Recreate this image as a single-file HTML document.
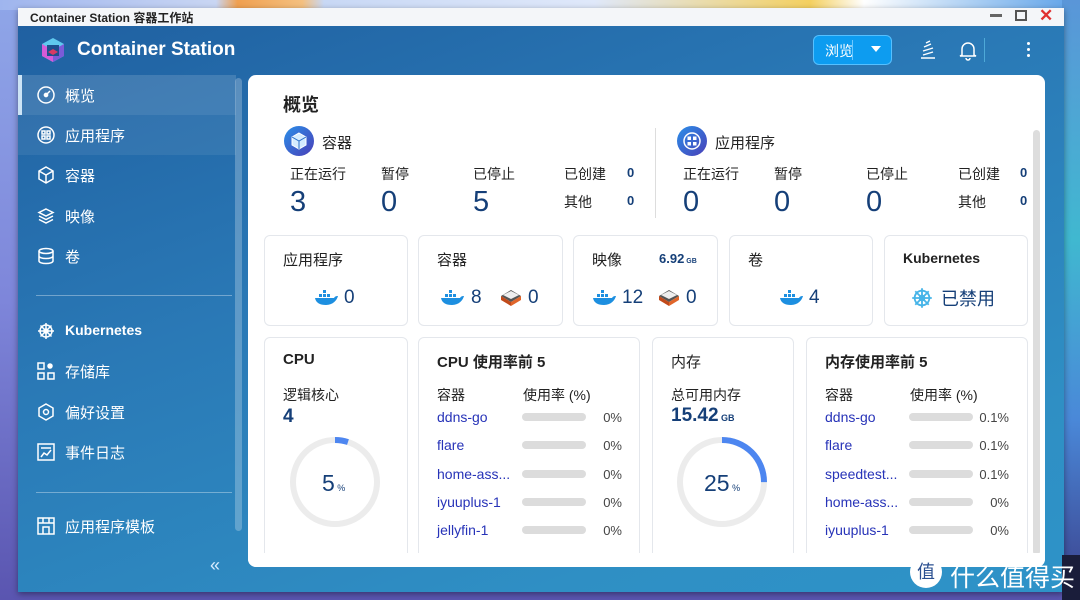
<!DOCTYPE html>
<html><head><meta charset="utf-8">
<style>
*{margin:0;padding:0;box-sizing:border-box}
body{width:1080px;height:600px;overflow:hidden;position:relative;font-family:"Liberation Sans","Noto Sans CJK SC",sans-serif;background:linear-gradient(180deg,#8fa6e8 0%,#7e86da 50%,#5a55b0 100%)}
.a{position:absolute}
.topdesk{left:0;top:0;width:1080px;height:10px;background:linear-gradient(90deg,#9fb5ee,#c9d6f3 20%,#f0a050 22%,#f4c080 28%,#c8d8f5 30%,#dfe8fa 55%,#f4d060 75%,#ffffff 80%,#5aa0e8 100%)}
.rightdesk{left:1062px;top:0;width:18px;height:600px;background:linear-gradient(180deg,#5a96d8,#40b8d0 40%,#4a88d8 70%,#3b3f8a 100%)}
.win{left:18px;top:8px;width:1046px;height:584px;background:linear-gradient(160deg,#1f5fa0 0%,#2a79b6 40%,#2f8fc4 80%,#2e93c8 100%);box-shadow:0 2px 6px rgba(0,0,0,.4)}
.title{left:18px;top:8px;width:1046px;height:18px;background:#f4f6f9}
.title span{position:absolute;left:12px;top:1px;font-size:12px;font-weight:bold;color:#222}
.side{color:#fff;font-size:15px}
.nav{position:absolute;left:18px;width:220px;height:40px}
.nav span{position:absolute;left:47px;top:10px}
.nav svg{position:absolute;left:19px;top:11px}
.card{position:absolute;left:248px;top:75px;width:797px;height:492px;background:#fff;border-radius:8px;overflow:hidden}
.box{position:absolute;border:1px solid #e4e7ec;border-radius:6px;background:#fff}
.lbl{position:absolute;font-size:14px;color:#222}
.big{position:absolute;font-size:29px;color:#153f78;font-weight:500}
.sm{position:absolute;font-size:13px;color:#153f78;font-weight:bold}
.h{position:absolute;font-size:15px;color:#222}
.lnk{position:absolute;font-size:14px;color:#2733b8}
.bar{position:absolute;width:64px;height:8px;border-radius:4px;background:#dcdcdc}
.pct{position:absolute;font-size:13px;color:#444;text-align:right;width:40px}
</style></head><body>
<div class="a topdesk"></div>
<div class="a rightdesk"></div>
<div class="a win"></div>
<div class="a title"><span>Container Station 容器工作站</span>
<div class="a" style="left:972px;top:6px;width:12px;height:3px;background:#666"></div>
<div class="a" style="left:997px;top:2px;width:12px;height:11px;border:2.5px solid #555"></div>
<div class="a" style="left:1021px;top:-2px;font-size:17px;color:#e03030;font-weight:bold">✕</div>
</div>
<!-- header -->
<svg class="a" style="left:40px;top:37px" width="26" height="26" viewBox="0 0 26 26"><polygon points="13,1 24,7 24,19 13,25 2,19 2,7" fill="#5fc9ee"/><polygon points="2,7 13,13 13,25 2,19" fill="#d55bd8"/><polygon points="24,7 13,13 13,25 24,19" fill="#7b5bd8"/><rect x="7" y="8" width="12" height="11" fill="#1d4f8e"/><polygon points="13,12 18,15 13,18 8,15" fill="#d83a64"/></svg>
<div class="a" style="left:77px;top:39px;font-size:19px;color:#fff;font-weight:bold">Container Station</div>
<div class="a" style="left:813px;top:35px;width:79px;height:30px;border-radius:6px;background:#0d9cf0;border:1px solid #55c0ff"></div>
<div class="a" style="left:825px;top:41px;color:#fff;font-size:14px">浏览</div>
<div class="a" style="left:852px;top:40px;width:1px;height:20px;background:#6cc8ff"></div>
<div class="a" style="left:871px;top:46px;width:0;height:0;border-left:5px solid transparent;border-right:5px solid transparent;border-top:6px solid #fff"></div>
<svg class="a" style="left:918px;top:39px" width="20" height="22" viewBox="0 0 20 22" fill="none" stroke="#fff" stroke-width="1.4"><path d="M3 19h14M5 16l10-3M5 12l10-3M6 8l7-3M8 4l4-2"/></svg>
<svg class="a" style="left:958px;top:39px" width="20" height="22" viewBox="0 0 20 22" fill="none" stroke="#fff" stroke-width="1.5"><path d="M4 16V10a6 6 0 0 1 12 0v6l2 1H2z M8 19a2 2 0 0 0 4 0"/></svg>
<div class="a" style="left:984px;top:38px;width:1px;height:24px;background:#4ea9d8"></div>
<div class="a" style="left:1027px;top:42px;width:3px;height:3px;background:#fff;border-radius:2px;box-shadow:0 6px 0 #fff,0 12px 0 #fff"></div>
<!-- sidebar -->
<div class="a" style="left:18px;top:75px;width:218px;height:40px;background:rgba(255,255,255,.14)"></div>
<div class="a" style="left:18px;top:75px;width:4px;height:40px;background:#cde4f6"></div>
<div class="a" style="left:18px;top:115px;width:218px;height:40px;background:rgba(255,255,255,.07)"></div>
<div class="a" style="left:235px;top:78px;width:7px;height:453px;border-radius:4px;background:rgba(255,255,255,.25)"></div>
<div class="side">
<div class="nav" style="top:75px"><svg width="18" height="18" viewBox="0 0 18 18" fill="none" stroke="#fff" stroke-width="1.5"><circle cx="9" cy="9" r="8"/><circle cx="9" cy="9" r="1.6" fill="#fff"/><path d="M9 9l4-4"/></svg><span>概览</span></div>
<div class="nav" style="top:115px"><svg width="18" height="18" viewBox="0 0 18 18" fill="none" stroke="#fff" stroke-width="1.5"><circle cx="9" cy="9" r="8"/><rect x="5" y="5" width="3" height="3"/><rect x="10" y="5" width="3" height="3"/><rect x="5" y="10" width="3" height="3"/><rect x="10" y="10" width="3" height="3"/></svg><span>应用程序</span></div>
<div class="nav" style="top:155px"><svg width="18" height="18" viewBox="0 0 18 18" fill="none" stroke="#fff" stroke-width="1.5"><path d="M9 1l7 4v8l-7 4-7-4V5z M2 5l7 4 7-4 M9 9v8"/></svg><span>容器</span></div>
<div class="nav" style="top:196px"><svg width="18" height="18" viewBox="0 0 18 18" fill="none" stroke="#fff" stroke-width="1.5"><path d="M9 2l7 3.5-7 3.5-7-3.5z M2 9l7 3.5 7-3.5 M2 12.5l7 3.5 7-3.5"/></svg><span>映像</span></div>
<div class="nav" style="top:236px"><svg width="18" height="18" viewBox="0 0 18 18" fill="none" stroke="#fff" stroke-width="1.5"><ellipse cx="9" cy="4" rx="7" ry="2.5"/><path d="M2 4v10c0 1.4 3 2.5 7 2.5s7-1.1 7-2.5V4 M2 9c0 1.4 3 2.5 7 2.5s7-1.1 7-2.5"/></svg><span>卷</span></div>
<div class="a" style="left:36px;top:295px;width:196px;height:1px;background:rgba(255,255,255,.35)"></div>
<div class="nav" style="top:311px"><svg width="18" height="18" viewBox="0 0 18 18" fill="none" stroke="#fff" stroke-width="1.5"><circle cx="9" cy="9" r="6"/><circle cx="9" cy="9" r="2"/><path d="M9 1v16M1 9h16M3.5 3.5l11 11M14.5 3.5l-11 11"/></svg><span style="font-weight:bold;font-size:14px;top:11px">Kubernetes</span></div>
<div class="nav" style="top:351px"><svg width="18" height="18" viewBox="0 0 18 18" fill="none" stroke="#fff" stroke-width="1.5"><rect x="1" y="1" width="6" height="6"/><rect x="1" y="11" width="6" height="6"/><rect x="11" y="11" width="6" height="6"/><circle cx="13" cy="4" r="2" fill="#fff"/></svg><span>存储库</span></div>
<div class="nav" style="top:392px"><svg width="18" height="18" viewBox="0 0 18 18" fill="none" stroke="#fff" stroke-width="1.5"><path d="M9 1l7 4v8l-7 4-7-4V5z"/><circle cx="9" cy="9" r="2.5"/></svg><span>偏好设置</span></div>
<div class="nav" style="top:432px"><svg width="18" height="18" viewBox="0 0 18 18" fill="none" stroke="#fff" stroke-width="1.5"><rect x="1" y="1" width="16" height="16"/><path d="M4 5h10M4 14l3-4 3 2 4-5"/></svg><span>事件日志</span></div>
<div class="a" style="left:36px;top:492px;width:196px;height:1px;background:rgba(255,255,255,.35)"></div>
<div class="nav" style="top:506px"><svg width="18" height="18" viewBox="0 0 18 18" fill="none" stroke="#fff" stroke-width="1.5"><rect x="1" y="1" width="16" height="16"/><path d="M1 6h16M6 1v5M12 1v5M6 17v-7h6v7"/></svg><span>应用程序模板</span></div>
<div class="a" style="left:210px;top:555px;font-size:18px;color:#d8ecff">«</div>
</div>
<!-- content card -->
<div class="card">
<div class="a" style="left:35px;top:16px;font-size:18px;font-weight:bold;color:#222">概览</div>
<svg class="a" style="left:36px;top:51px" width="30" height="30" viewBox="0 0 30 30"><defs><linearGradient id="g" x1="0" y1="0" x2="1" y2="1"><stop offset="0" stop-color="#2a8fe8"/><stop offset="1" stop-color="#4a3fb8"/></linearGradient></defs><circle cx="15" cy="15" r="15" fill="url(#g)"/><path d="M15 7l7 4v8l-7 4-7-4v-8z" fill="#d4ecff" stroke="#fff"/><path d="M8 11l7 4 7-4M15 15v8" stroke="#2a6fc8" fill="none"/></svg>
<div class="h" style="left:74px;top:57px">容器</div>
<div class="lbl" style="left:42px;top:89px">正在运行</div><div class="lbl" style="left:133px;top:89px">暂停</div><div class="lbl" style="left:225px;top:89px">已停止</div>
<div class="big" style="left:42px;top:111px">3</div><div class="big" style="left:133px;top:111px">0</div><div class="big" style="left:225px;top:111px">5</div>
<div class="lbl" style="left:316px;top:89px">已创建</div><div class="sm" style="left:379px;top:90px">0</div>
<div class="lbl" style="left:316px;top:117px">其他</div><div class="sm" style="left:379px;top:118px">0</div>
<div class="a" style="left:407px;top:53px;width:1px;height:90px;background:#ddd"></div>
<svg class="a" style="left:429px;top:51px" width="30" height="30" viewBox="0 0 30 30"><circle cx="15" cy="15" r="15" fill="url(#g)"/><circle cx="15" cy="15" r="8" fill="none" stroke="#fff" stroke-width="1.5"/><rect x="10.5" y="10.5" width="3.5" height="3.5" fill="#fff"/><rect x="16" y="10.5" width="3.5" height="3.5" fill="#fff"/><rect x="10.5" y="16" width="3.5" height="3.5" fill="#fff"/><rect x="16" y="16" width="3.5" height="3.5" fill="#fff"/></svg>
<div class="h" style="left:467px;top:57px">应用程序</div>
<div class="lbl" style="left:435px;top:89px">正在运行</div><div class="lbl" style="left:526px;top:89px">暂停</div><div class="lbl" style="left:618px;top:89px">已停止</div>
<div class="big" style="left:435px;top:111px">0</div><div class="big" style="left:526px;top:111px">0</div><div class="big" style="left:618px;top:111px">0</div>
<div class="lbl" style="left:710px;top:89px">已创建</div><div class="sm" style="left:772px;top:90px">0</div>
<div class="lbl" style="left:710px;top:117px">其他</div><div class="sm" style="left:772px;top:118px">0</div>
<div class="a" style="left:785px;top:55px;width:7px;height:425px;border-radius:4px;background:#ddd"></div>

<!-- row1 -->
<div class="box" style="left:16px;top:160px;width:144px;height:91px"><div class="h" style="left:18px;top:13px">应用程序</div></div>
<div class="box" style="left:170px;top:160px;width:145px;height:91px"><div class="h" style="left:18px;top:13px">容器</div></div>
<div class="box" style="left:325px;top:160px;width:145px;height:91px"><div class="h" style="left:18px;top:13px">映像</div><div class="sm" style="left:85px;top:15px">6.92<span style="font-size:7px"> GB</span></div></div>
<div class="box" style="left:481px;top:160px;width:144px;height:91px"><div class="h" style="left:18px;top:13px">卷</div></div>
<div class="box" style="left:636px;top:160px;width:144px;height:91px"><div class="h" style="left:18px;top:14px;font-weight:bold;font-size:14px">Kubernetes</div>
<svg class="a" style="left:26px;top:51px" width="22" height="22" viewBox="0 0 18 18" fill="none" stroke="#46b4e8" stroke-width="1.5"><circle cx="9" cy="9" r="6"/><circle cx="9" cy="9" r="2"/><path d="M9 1v16M1 9h16M3.5 3.5l11 11M14.5 3.5l-11 11"/></svg>
<div class="a" style="left:56px;top:49px;font-size:18px;color:#153f78">已禁用</div></div>

<svg width="0" height="0" style="position:absolute"><defs>
<g id="dk"><path d="M1 9h19c1-2 3-2 4-2-1 4-5 9-12 9C6 16 2 14 1 9z" fill="#1d8fe0"/><rect x="5" y="5" width="3" height="3" fill="#1d8fe0"/><rect x="9" y="5" width="3" height="3" fill="#1d8fe0"/><rect x="13" y="5" width="3" height="3" fill="#1d8fe0"/><rect x="9" y="1" width="3" height="3" fill="#1d8fe0"/></g>
<g id="lx"><path d="M2 9l10-6 10 6-10 6z" fill="#555"/><path d="M2 9v4l10 6v-4z" fill="#c14a1a"/><path d="M22 9v4l-10 6v-4z" fill="#e0652a"/><path d="M4 8l8-4 8 4-8 4z" fill="#eee"/></g>
</defs></svg>
<svg class="a" style="left:66px;top:214px" width="24" height="20"><use href="#dk"/></svg><div class="a" style="left:96px;top:212px;font-size:19px;color:#153f78">0</div>
<svg class="a" style="left:192px;top:214px" width="24" height="20"><use href="#dk"/></svg><div class="a" style="left:223px;top:212px;font-size:19px;color:#153f78">8</div>
<svg class="a" style="left:251px;top:212px" width="24" height="22"><use href="#lx"/></svg><div class="a" style="left:280px;top:212px;font-size:19px;color:#153f78">0</div>
<svg class="a" style="left:344px;top:214px" width="24" height="20"><use href="#dk"/></svg><div class="a" style="left:374px;top:212px;font-size:19px;color:#153f78">12</div>
<svg class="a" style="left:409px;top:212px" width="24" height="22"><use href="#lx"/></svg><div class="a" style="left:438px;top:212px;font-size:19px;color:#153f78">0</div>
<svg class="a" style="left:531px;top:214px" width="24" height="20"><use href="#dk"/></svg><div class="a" style="left:561px;top:212px;font-size:19px;color:#153f78">4</div>

<!-- row2 -->
<div class="box" style="left:16px;top:262px;width:144px;height:240px"><div class="h" style="left:18px;top:13px;font-weight:bold">CPU</div>
<div class="lbl" style="left:18px;top:47px">逻辑核心</div><div class="a" style="left:18px;top:68px;font-size:19px;color:#153f78;font-weight:bold">4</div></div>
<svg class="a" style="left:39px;top:359px" width="96" height="96" viewBox="0 0 96 96"><circle cx="48" cy="48" r="42" fill="none" stroke="#ececec" stroke-width="6"/><circle cx="48" cy="48" r="42" fill="none" stroke="#4d86f0" stroke-width="6" stroke-dasharray="13.2 264" transform="rotate(-90 48 48)"/></svg>
<div class="a" style="left:74px;top:395px;font-size:23px;color:#153f78">5<span style="font-size:9px"> %</span></div>

<div class="box" style="left:170px;top:262px;width:222px;height:240px"><div class="h" style="left:18px;top:13px;font-weight:bold">CPU 使用率前 5</div>
<div class="lbl" style="left:18px;top:47px">容器</div><div class="lbl" style="left:104px;top:47px">使用率 (%)</div></div>
<div class="box" style="left:404px;top:262px;width:142px;height:240px"><div class="h" style="left:18px;top:13px">内存</div>
<div class="lbl" style="left:18px;top:47px">总可用内存</div><div class="a" style="left:18px;top:67px;font-size:19px;color:#153f78;font-weight:bold">15.42<span style="font-size:9px"> GB</span></div></div>
<svg class="a" style="left:426px;top:359px" width="96" height="96" viewBox="0 0 96 96"><circle cx="48" cy="48" r="42" fill="none" stroke="#ececec" stroke-width="6"/><circle cx="48" cy="48" r="42" fill="none" stroke="#4d86f0" stroke-width="6" stroke-dasharray="66 264" transform="rotate(-90 48 48)"/></svg>
<div class="a" style="left:456px;top:395px;font-size:23px;color:#153f78">25<span style="font-size:9px"> %</span></div>
<div class="box" style="left:558px;top:262px;width:222px;height:240px"><div class="h" style="left:18px;top:13px;font-weight:bold">内存使用率前 5</div>
<div class="lbl" style="left:18px;top:47px">容器</div><div class="lbl" style="left:103px;top:47px">使用率 (%)</div></div>

<div class="lnk" style="left:189px;top:334px">ddns-go</div><div class="bar" style="left:274px;top:338px"></div><div class="pct" style="left:334px;top:335px">0%</div>
<div class="lnk" style="left:189px;top:362px">flare</div><div class="bar" style="left:274px;top:366px"></div><div class="pct" style="left:334px;top:363px">0%</div>
<div class="lnk" style="left:189px;top:391px">home-ass...</div><div class="bar" style="left:274px;top:395px"></div><div class="pct" style="left:334px;top:392px">0%</div>
<div class="lnk" style="left:189px;top:419px">iyuuplus-1</div><div class="bar" style="left:274px;top:423px"></div><div class="pct" style="left:334px;top:420px">0%</div>
<div class="lnk" style="left:189px;top:447px">jellyfin-1</div><div class="bar" style="left:274px;top:451px"></div><div class="pct" style="left:334px;top:448px">0%</div>

<div class="lnk" style="left:577px;top:334px">ddns-go</div><div class="bar" style="left:661px;top:338px"></div><div class="pct" style="left:721px;top:335px">0.1%</div>
<div class="lnk" style="left:577px;top:362px">flare</div><div class="bar" style="left:661px;top:366px"></div><div class="pct" style="left:721px;top:363px">0.1%</div>
<div class="lnk" style="left:577px;top:391px">speedtest...</div><div class="bar" style="left:661px;top:395px"></div><div class="pct" style="left:721px;top:392px">0.1%</div>
<div class="lnk" style="left:577px;top:419px">home-ass...</div><div class="bar" style="left:661px;top:423px"></div><div class="pct" style="left:721px;top:420px">0%</div>
<div class="lnk" style="left:577px;top:447px">iyuuplus-1</div><div class="bar" style="left:661px;top:451px"></div><div class="pct" style="left:721px;top:448px">0%</div>
<div class="a" style="left:0;top:478px;width:797px;height:14px;background:#fff"></div>
</div>
<div class="a" style="left:1062px;top:555px;width:18px;height:45px;background:#1a1d3a"></div>
<div class="a" style="left:910px;top:556px;width:32px;height:32px;border-radius:50%;background:#fff;color:#2a4f90;font-size:18px;text-align:center;line-height:32px">值</div>
<div class="a" style="left:950px;top:558px;font-size:25px;color:#fff">什么值得买</div>
</body></html>
